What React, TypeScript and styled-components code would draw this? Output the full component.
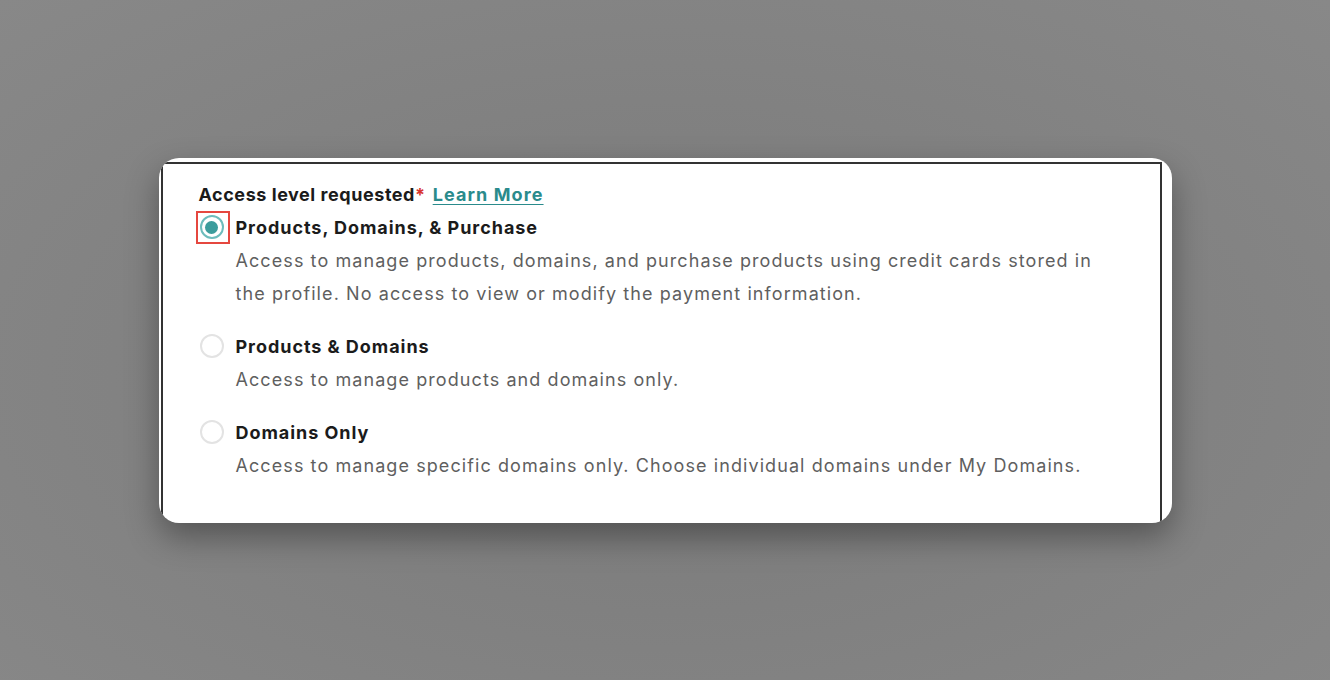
import React, { useState } from "react";
import styled, { createGlobalStyle } from "styled-components";

const GlobalStyle = createGlobalStyle`
  html, body {
    margin: 0;
    padding: 0;
  }
  body {
    font-family: "Inter", "Liberation Sans", sans-serif;
  }
`;

const Page = styled.div`
  width: 100vw;
  height: 100vh;
  display: flex;
  align-items: center;
  justify-content: center;
  background: radial-gradient(ellipse at 50% 55%, #797979 0%, #808080 45%, #888888 100%);
  overflow: hidden;
`;

const Card = styled.div`
  width: 1013px;
  height: 365px;
  background-color: #fff;
  border-radius: 20px;
  overflow: hidden;
  box-shadow: 0 14px 32px rgba(0, 0, 0, 0.35);
  display: flex;
`;

// the captured frame edge: dark rule on top, left and right
const Frame = styled.div`
  flex: 1;
  margin: 4px 10px -20px 2px;
  border: 2px solid #333;
  border-bottom: none;
  padding: 14px 0 0 33px;
`;

const Heading = styled.div`
  padding-left: 3px;
  font-size: 18px;
  font-weight: 700;
  line-height: 33px;
  letter-spacing: 0.55px;
  color: #1b1b1b;
  .star {
    color: #d8352f;
  }
  a {
    margin-left: 7px;
    color: #2a8b8c;
    letter-spacing: 1.1px;
    text-decoration: underline;
    text-underline-offset: 3px;
  }
`;

const OptionList = styled.div`
  display: flex;
  flex-direction: column;
  gap: 20px;
`;

const Option = styled.div`
  display: grid;
  grid-template-columns: 34px 1fr;
  column-gap: 6px;
  cursor: pointer;
`;

const Focus = styled.span<{ $active: boolean }>`
  box-sizing: border-box;
  width: 34px;
  height: 33px;
  border: 2px solid ${(p) => (p.$active ? "#e5473f" : "transparent")};
  display: flex;
  align-items: center;
  justify-content: center;
  padding-right: 2px;
`;

const Radio = styled.span<{ $checked: boolean }>`
  box-sizing: border-box;
  width: 24px;
  height: 24px;
  border-radius: 50%;
  border: 2px solid ${(p) => (p.$checked ? "#6dbcbc" : "#e3e3e3")};
  display: flex;
  align-items: center;
  justify-content: center;
  &:after {
    content: "";
    width: 13px;
    height: 13px;
    border-radius: 50%;
    background-color: ${(p) => (p.$checked ? "#3c9c9c" : "transparent")};
  }
`;

const Title = styled.div`
  font-size: 18px;
  font-weight: 700;
  line-height: 33px;
  letter-spacing: 0.95px;
  color: #1b1b1b;
`;

const Desc = styled.div`
  grid-column: 2;
  max-width: 872px;
  font-size: 18px;
  line-height: 33px;
  color: #5f5f5f;
  letter-spacing: 1.08px;
`;

const options = [
  {
    id: "purchase",
    title: "Products, Domains, & Purchase",
    desc: "Access to manage products, domains, and purchase products using credit cards stored in the profile. No access to view or modify the payment information.",
  },
  {
    id: "products",
    title: "Products & Domains",
    desc: "Access to manage products and domains only.",
  },
  {
    id: "domains",
    title: "Domains Only",
    desc: "Access to manage specific domains only. Choose individual domains under My Domains.",
  },
];

const App: React.FC = () => {
  const [selected, setSelected] = useState("purchase");

  return (
    <Page>
      <GlobalStyle />
      <Card>
        <Frame>
          <Heading>
            Access level requested<span className="star">*</span>
            <a href="#">Learn More</a>
          </Heading>
          <OptionList>
            {options.map((opt) => (
              <Option key={opt.id} onClick={() => setSelected(opt.id)}>
                <Focus $active={selected === opt.id}>
                  <Radio $checked={selected === opt.id} />
                </Focus>
                <Title>{opt.title}</Title>
                <Desc>{opt.desc}</Desc>
              </Option>
            ))}
          </OptionList>
        </Frame>
      </Card>
    </Page>
  );
};

export default App;
